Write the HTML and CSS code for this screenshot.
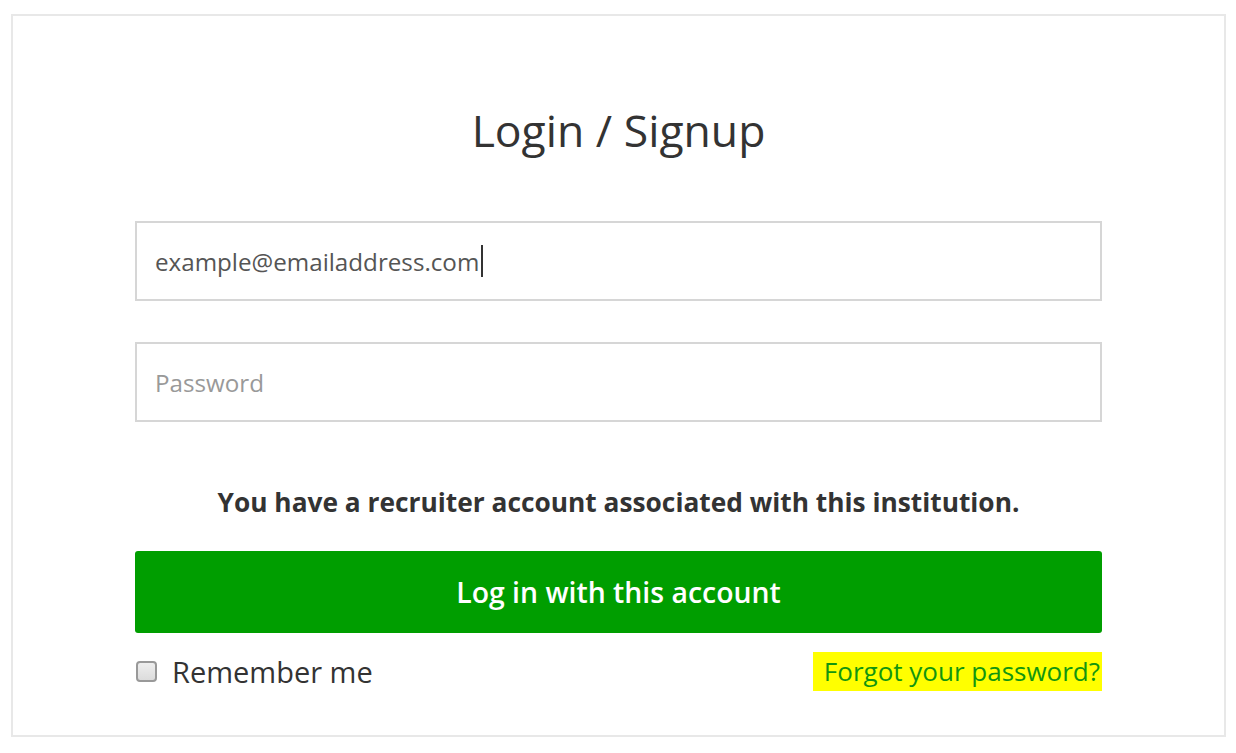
FILE: index.html
```html
<!DOCTYPE html>
<html lang="en">
<head>
    <meta charset="UTF-8">
    <title>Login / Signup</title>
    <link rel="stylesheet" href="styles.css">
</head>
<body>
<div class="box">
    <h1 class="title">Login / Signup</h1>
    <div class="field">
        <span class="value">example@emailaddress.com</span><span class="caret"></span>
    </div>
    <div class="field">
        <span class="holder">Password</span>
    </div>
    <p class="note">You have a recruiter account associated with this institution.</p>
    <a href="javascript:" class="btn">Log in with this account</a>
    <div class="foot">
        <label class="remember"><span class="check"></span>Remember me</label>
        <a href="javascript:" class="forgot">Forgot your password?</a>
    </div>
</div>
</body>
</html>
```
FILE: styles.css
```css
* {
    margin: 0;
    padding: 0;
    box-sizing: border-box;
}

body {
    font-family: "Open Sans", "Liberation Sans", sans-serif;
    color: #333;
    background: #fff;
}

.box {
    margin: 14px 0 0 11px;
    width: 1215px;
    height: 723px;
    border: 2px solid #e8e8e8;
    padding: 0 122px;
}

.title {
    font-weight: 400;
    font-size: 44.5px;
    line-height: 60px;
    text-align: center;
    margin-top: 84px;
    color: #333;
}

.field {
    height: 80px;
    border: 2px solid #d6d6d6;
    display: flex;
    align-items: center;
    padding-left: 18px;
    font-size: 24.2px;
}

.field + .field {
    margin-top: 41px;
}

.title + .field {
    margin-top: 61px;
}

.value {
    color: #555;
}

.caret {
    display: inline-block;
    width: 2px;
    height: 32px;
    background: #333;
    margin-left: 2px;
}

.holder {
    color: #999;
}

.note {
    text-align: center;
    font-weight: 700;
    font-size: 26.3px;
    line-height: 32px;
    margin-top: 64px;
}

.btn {
    display: block;
    margin-top: 33px;
    height: 82px;
    line-height: 82px;
    background: #009e00;
    border-radius: 3px;
    color: #fff;
    text-align: center;
    font-size: 28.4px;
    font-weight: 600;
    text-decoration: none;
}

.foot {
    display: flex;
    justify-content: space-between;
    align-items: center;
    margin-top: 19px;
}

.remember {
    display: flex;
    align-items: center;
    font-size: 29px;
    color: #333;
}

.check {
    width: 21px;
    height: 21px;
    border: 2px solid #999;
    border-radius: 4px;
    background: linear-gradient(#eee, #dcdcdc);
    margin: 0 15px 0 1px;
}

.forgot {
    font-size: 26px;
    color: #12960f;
    background: #ffff00;
    text-decoration: none;
    padding: 1px 2px 2px 11px;
}
```
